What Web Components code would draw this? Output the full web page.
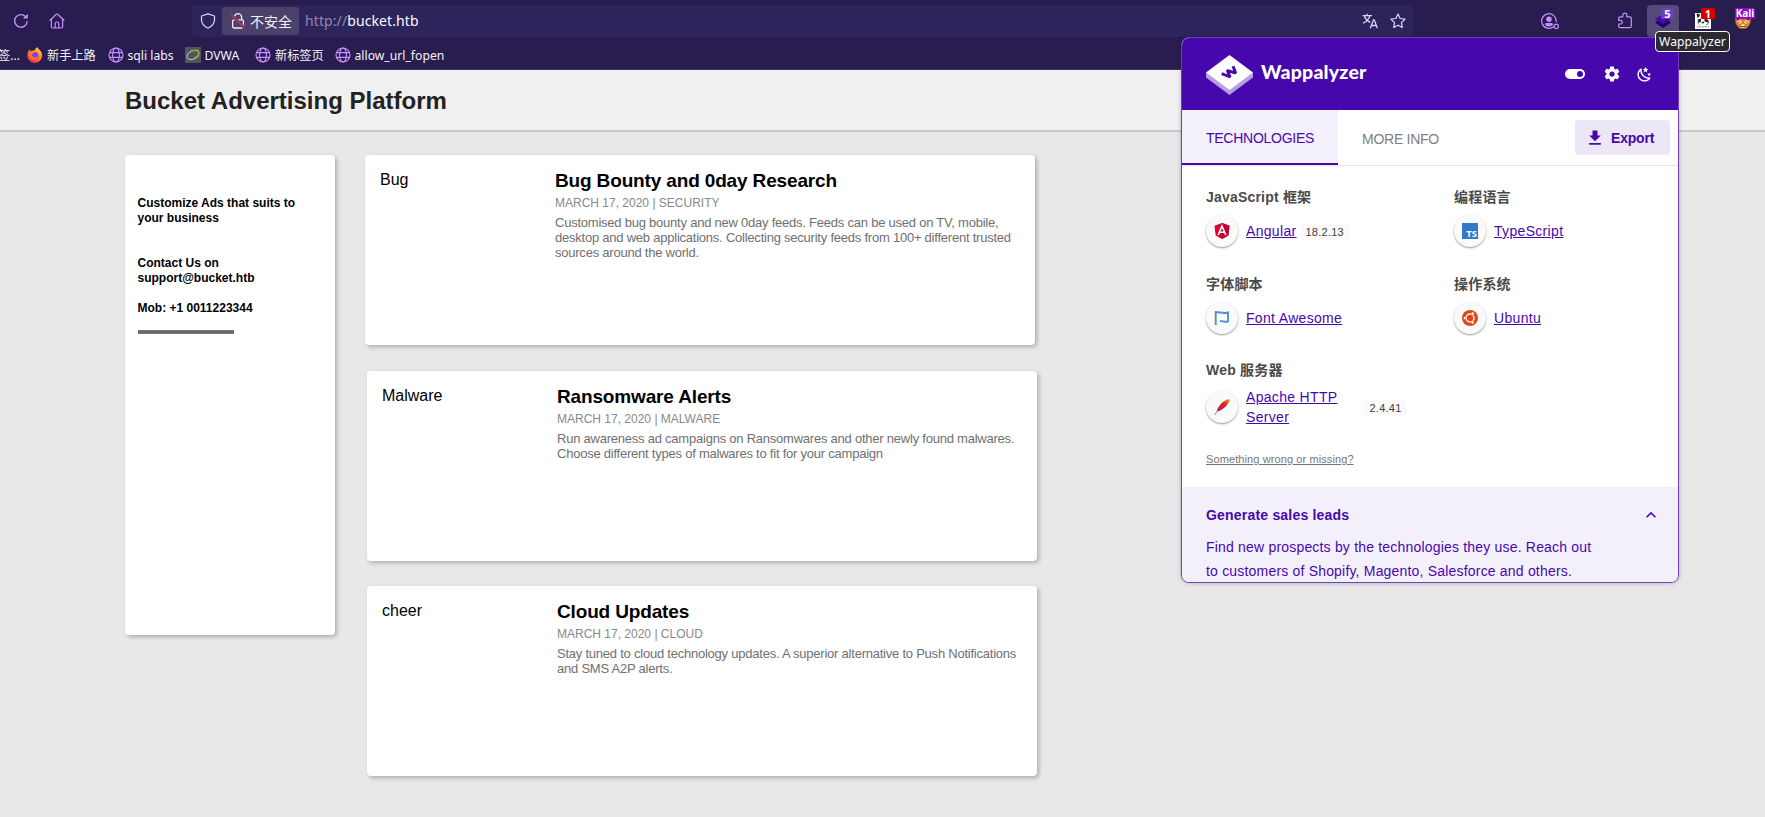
<!DOCTYPE html>
<html lang="zh-CN">
<head>
<meta charset="utf-8">
<title>Bucket Advertising Platform</title>
<style>
html,body{margin:0;height:100%;overflow:hidden;background:#e8e8e8}
body{font-family:"Liberation Sans","Noto Sans CJK SC",sans-serif}
</style>
</head>
<body>
<browser-window></browser-window>
<script>
const define=(name,html)=>customElements.define(name,class extends HTMLElement{
  constructor(){super();this.attachShadow({mode:'open'}).innerHTML=html;}
});

const ICONS={
reload:['0 0 16 16','<path d="M14.2 8.2A6.3 6.3 0 1 1 12.6 3.7" fill="none" stroke="currentColor" stroke-width="1.4"/><path d="M14.8.8v4.6h-4.8z" fill="currentColor"/>'],
home:['0 0 16 16','<path d="M1 7.2 7.3 1.3q.7-.6 1.4 0L15 7.2M2.4 6.2v7.6q0 1.2 1.2 1.2h8.8q1.2 0 1.2-1.2V6.2M6.2 15v-4.2a1.8 1.8 0 0 1 3.6 0V15" fill="none" stroke="currentColor" stroke-width="1.2" stroke-linecap="round" stroke-linejoin="round"/>'],
shield:['0 0 16 16','<path d="M8 .9 14.5 3v3.4c0 4-2.3 6.7-6.5 8.8C3.8 13.1 1.5 10.4 1.5 6.4V3z" fill="none" stroke="currentColor" stroke-width="1.2" stroke-linejoin="round"/>'],
lock:['0 0 16 16','<path d="M4.4 6.8V4.3a3.6 3.6 0 0 1 7.2 0V6.8" fill="none" stroke="currentColor" stroke-width="1.3"/><rect x="2.6" y="6.8" width="10.8" height="8.2" rx="1.4" fill="none" stroke="currentColor" stroke-width="1.3"/><path d="m1.5 2 13 13" stroke="#4a416b" stroke-width="3"/><path d="m1.2 1.7 13.3 13.3" stroke="#e22850" stroke-width="1.3"/>'],
translate:['0 0 16 16','<path d="M.6 2.6h9.4M5.2.8v1.8M7.800 2.800C7 6.200 4 8.600 1 10.200M2.400 3C3.400 6 6 8.300 8.200 9.400M8.300 15.200l3.200-8.400h.7l3.200 8.400M9.400 12.500h5" fill="none" stroke="currentColor" stroke-width="1.300"/>'],
star:['0 0 16 16','<path d="m8 1 2.100 4.500 4.900.7-3.600 3.400.9 4.900L8 12.200l-4.300 2.300.9-4.900L1 6.200l4.900-.7z" fill="none" stroke="currentColor" stroke-width="1.200" stroke-linejoin="round"/>'],
account:['0 0 18 17','<path d="M12.800 13.500A7.300 7.300 0 1 1 15.200 9" fill="none" stroke="currentColor" stroke-width="1.200"/><circle cx="8" cy="6.300" r="2.700" fill="currentColor"/><path d="M3.800 11.300q.4-1.400 1.800-1.400h4.800q1.300 0 1.800 1.300Q10.600 13.500 8 13.500T3.800 11.300z" fill="currentColor"/><circle cx="15.200" cy="13.300" r="2.200" fill="none" stroke="currentColor" stroke-width="1.200"/>'],
puzzle:['0 0 16 17','<path d="M5.800 4.800V3.200a2 2 0 0 1 4 0V4.800h3q1.500 0 1.500 1.500v7.900q0 1.500-1.500 1.500H3.200q-1.500 0-1.500-1.500V12H3.500a1.800 1.800 0 0 0 0-3.600H1.700V6.300q0-1.500 1.500-1.500z" fill="none" stroke="currentColor" stroke-width="1.200" stroke-linejoin="round"/>'],
globe:['0 0 16 16','<g fill="none" stroke="currentColor" stroke-width="1.150"><circle cx="8" cy="8" r="7"/><ellipse cx="8" cy="8" rx="3.400" ry="7"/><path d="M1.500 5.600h13M1.500 10.400h13"/></g>'],
firefox:['0 0 16 16','<defs><linearGradient id="f" x1=".9" y1="0" x2=".2" y2="1"><stop offset="0" stop-color="#ffe244"/><stop offset=".45" stop-color="#ff8a16"/><stop offset="1" stop-color="#f5156c"/></linearGradient></defs><path d="M10.700.2c.4 1.800 2 2.500 3 4 3.600 5-.1 11.600-5.800 11.600C2.500 15.800-.8 10.700.6 6.500 1 4.600 2.100 2.400 2.500 2.300c.2.600.4 1.400.9 1.900 1.500-.8 2.800-.8 4.200-.4C7.900 2.200 9.200.5 10.700.2z" fill="url(#f)"/><circle cx="7.800" cy="8.700" r="3.600" fill="#7a3ff0"/><path d="M1.800 5.500c2-1.600 4.700-.8 5.800.5-1.600 0-1.800.8-2.700 1.700.4 3 4 3.700 6 1.400 0 3.200-3.600 4.800-6.300 3.200C2.400 11 1.500 8 1.800 5.500z" fill="#ff7a1c"/>'],
dvwa:['0 0 16 16','<path fill="#50575a" d="M0 0h16v16H0z"/><ellipse cx="8" cy="8" rx="6.300" ry="4.200" transform="rotate(-25 8 8)" fill="none" stroke="#b4b9a9" stroke-width="1.100"/><path d="M6 4.200C9.500 2.500 14 2.500 13.800 5.800c-.2 2.200-2.300 4.300-4.600 5.400" fill="none" stroke="#8ea648" stroke-width="1.300"/>'],
wapp:['0 0 16 16','<path d="M8 5.200 16 10.500 8 16 0 10.500z" fill="#1d0460"/><path d="M8 1.600 16 7 8 12.400 0 7z" fill="#4608ad"/>'],
panda:['0 0 16 16','<path fill="#fff" d="M0 0h16v16H0z"/><path d="M1.500.8h3.200v2.500L2.500 5zM2.500 6.800l3.500-1.300v3L3.500 10zM9.500 5.500l3.500 1.300v2.800l-3.500-1zM6.600 8.800h2.500v1.400H6.600zM2 5v4l2 2 1 1h6l2-2 .5-3.500.5 3-2 2.500H4.500L2 9.500z" fill="#252525"/><path d="M2 13.800h12" stroke="#555" stroke-width=".9" stroke-dasharray="1 .6"/>'],
fox:['0 0 16 15','<path d="M0 3h16l-.8 7-3.700 4.500h-7L.8 10z" fill="#e77d16"/><path d="M2 7.500 5 6l2 2.500-2.500 1.200zM9 8.500 11 6l3 1.500-2.500 2.200z" fill="#fff"/><path d="m5 11.500 3-1.500 3 1.500-1.500 2.500h-3z" fill="#f7e3cd"/><path d="M3.500 8h1.800M10.700 8h1.800M5 12l2.700.8L11 12M1.500 5.500h3M11.500 5.500h3" stroke="#5c2a08" fill="none"/>'],
logo:['0 0 47 40','<path d="M0 17.500h47v5L23.500 40 0 22.500z" fill="#b59fe1"/><path d="M23.500 0 47 17.500 23.500 35 0 17.500z" fill="#fff"/><path d="m15.700 18.700 8.500 3.300-3-6.500 8.500 2.600-2.700-6.800" fill="none" stroke="#4608ad" stroke-width="2.900" stroke-linejoin="bevel"/>'],
gear:['0 0 24 24','<path fill="currentColor" d="M12,15.500A3.500,3.500 0 0,1 8.500,12A3.500,3.500 0 0,1 12,8.500A3.500,3.500 0 0,1 15.500,12A3.500,3.500 0 0,1 12,15.500M19.430,12.970C19.470,12.650 19.500,12.330 19.500,12C19.500,11.670 19.470,11.340 19.430,11L21.540,9.370C21.730,9.220 21.780,8.950 21.660,8.730L19.660,5.270C19.540,5.050 19.270,4.960 19.050,5.050L16.560,6.050C16.040,5.660 15.500,5.320 14.870,5.070L14.500,2.420C14.460,2.180 14.250,2 14,2H10C9.750,2 9.540,2.180 9.500,2.420L9.130,5.070C8.500,5.320 7.960,5.660 7.440,6.050L4.950,5.050C4.730,4.960 4.460,5.050 4.340,5.270L2.340,8.730C2.210,8.950 2.270,9.220 2.460,9.370L4.570,11C4.530,11.340 4.500,11.670 4.500,12C4.500,12.330 4.530,12.650 4.570,12.970L2.460,14.630C2.270,14.780 2.210,15.050 2.340,15.270L4.340,18.730C4.460,18.950 4.730,19.030 4.950,18.950L7.440,17.940C7.960,18.340 8.500,18.680 9.130,18.930L9.500,21.580C9.540,21.820 9.750,22 10,22H14C14.250,22 14.460,21.820 14.500,21.580L14.870,18.930C15.500,18.670 16.040,18.340 16.560,17.940L19.050,18.950C19.270,19.030 19.540,18.950 19.660,18.730L21.660,15.270C21.780,15.050 21.730,14.780 21.540,14.630L19.430,12.970Z"/>'],
moon:['0 0 24 24','<path fill="currentColor" d="M17.750,4.090L15.220,6.030L16.130,9.090L13.500,7.280L10.870,9.090L11.780,6.030L9.250,4.090L12.440,4L13.500,1L14.560,4L17.750,4.090M21.250,11L19.610,12.250L20.200,14.230L18.500,13.060L16.800,14.230L17.390,12.250L15.750,11L17.810,10.950L18.500,9L19.190,10.950L21.250,11M18.970,15.950C19.800,15.870 20.690,17.050 20.160,17.800C19.840,18.250 19.500,18.670 19.080,19.070C15.170,23 8.840,23 4.940,19.070C1.030,15.170 1.030,8.830 4.940,4.930C5.340,4.530 5.760,4.170 6.210,3.850C6.960,3.320 8.140,4.210 8.060,5.040C7.790,7.900 8.750,10.870 10.950,13.060C13.140,15.260 16.100,16.220 18.970,15.950M17.330,17.970C14.500,17.810 11.700,16.640 9.530,14.500C7.360,12.310 6.200,9.500 6.040,6.680C3.230,9.820 3.340,14.640 6.350,17.660C9.370,20.670 14.190,20.780 17.330,17.970Z"/>'],
toggle:['0 0 20 10','<rect width="20" height="10" rx="5" fill="#fff"/><circle cx="15" cy="5" r="3" fill="#4608ad"/>'],
download:['0 0 24 24','<path fill="currentColor" d="M5 20h14v-2H5v2zM19 9h-4V3H9v6H5l7 7 7-7z"/>'],
chevron:['0 0 24 24','<path fill="currentColor" d="M7.410,15.410L12,10.830L16.590,15.410L18,14L12,8L6,14L7.410,15.410Z"/>'],
angular:['0 0 16 16','<path d="M8 0 15.500 2.700 14.300 12.500 8 16 1.700 12.500.5 2.700z" fill="#dd0031"/><path d="M8 0 15.500 2.700 14.300 12.500 8 16z" fill="#c3002f"/><path d="M4.200 12 8 3l3.800 9M5.700 9.300h4.600" fill="none" stroke="#fff" stroke-width="1.600"/>'],
fa:['0 0 16 16','<path d="M1.700 1v14M1.700 2.600C5 1 8 4.300 14 2.500v8.800c-3.500 1.500-5-.4-8-.3" fill="none" stroke="#4f8fd9" stroke-width="1.900"/>'],
ubuntu:['0 0 16 16','<circle cx="8" cy="8" r="8" fill="#dd4814"/><circle cx="8" cy="8" r="3.900" fill="none" stroke="#fff" stroke-width="1.500"/><g fill="#fff" stroke="#dd4814" stroke-width=".6"><circle cx="2.800" cy="8" r="1.500"/><circle cx="10.600" cy="3.500" r="1.500"/><circle cx="10.600" cy="12.500" r="1.500"/></g>'],
apache:['0 0 16 16','<defs><linearGradient id="a" x1="1" y1="0" x2="0" y2="1"><stop offset="0" stop-color="#f8a01c"/><stop offset=".35" stop-color="#d5212e"/><stop offset=".65" stop-color="#c22049"/><stop offset="1" stop-color="#8b3f96"/></linearGradient></defs><path d="M15.800.3C14 0 10.500 1.300 7.500 4.300 4.500 7.800 3 10.500 2.900 12L.3 16l.7-.1L3.300 12.500c3.200-.4 7.200-3.400 9.700-6.500C14.800 4.300 16 2 15.800.3z" fill="url(#a)"/>']
};
customElements.define('app-icon',class extends HTMLElement{
  connectedCallback(){
    const [box,body]=ICONS[this.getAttribute('name')];
    const w=this.getAttribute('w')||16,h=this.getAttribute('h')||w;
    const r=this.shadowRoot||this.attachShadow({mode:'open'});
    r.innerHTML=`<style>:host{display:block;flex:none;width:${w}px;height:${h}px}svg{display:block}</style><svg width="${w}" height="${h}" viewBox="${box}" preserveAspectRatio="none">${body}</svg>`;
  }
});

define('nav-bar',`<style>
:host{display:flex;height:40px;box-sizing:border-box;padding:5px 8px 0 13px;color:#c490ff;font-family:"Noto Sans","Noto Sans CJK SC",sans-serif}
.left{display:flex;gap:19.500px;width:179px;padding-top:8px}
.url{display:flex;width:1222px;height:32px;box-sizing:border-box;padding:0 8px 0 8px;border-radius:4px;background:#2e245c;color:#dcd3f5;align-items:center}
.sec{display:flex;align-items:center;width:77px;height:28px;box-sizing:border-box;margin-left:6px;padding-left:8px;gap:4px;border-radius:3px;background:#4a416b;font:14px/28px "Noto Sans CJK SC",sans-serif;color:#f3effc;white-space:nowrap}
.addr{flex:1;margin-left:6px;font-size:14px;line-height:28px;color:#fbfbfe;letter-spacing:.1px}
.addr i{font-style:normal;color:#9188ab;letter-spacing:.1px}
.acts{display:flex;gap:12px}
.right{display:flex;flex:1;padding-left:127px}
.right>*{flex:none}
.wap{width:32px;height:32px;border-radius:4px;background:#564a79;margin-left:14px;position:relative}
.wap app-icon{margin:7px 8px}
.ext{position:relative;width:20px;height:32px}
b{position:absolute;top:3px;height:11px;font:bold 11px/11px "Noto Sans",sans-serif;color:#fff;text-align:center;border-radius:1.500px;white-space:nowrap}
</style>
<div class="left"><app-icon name="reload"></app-icon><app-icon name="home" w="16"></app-icon></div>
<div class="url"><app-icon name="shield"></app-icon><div class="sec"><app-icon name="lock"></app-icon><span>不安全</span></div>
<div class="addr"><i>http://</i>bucket.htb</div><div class="acts"><app-icon name="translate"></app-icon><app-icon name="star"></app-icon></div></div>
<div class="right"><app-icon name="account" w="18" h="17" style="margin-top:8px"></app-icon><app-icon name="puzzle" w="16" h="17" style="margin:7px 0 0 58px"></app-icon>
<div class="wap"><app-icon name="wapp"></app-icon><b style="left:14px;width:13px;background:#6b3fbf">5</b></div>
<div class="ext" style="margin-left:16px"><app-icon name="panda" style="padding-top:8px"></app-icon><b style="left:6px;width:14px;background:#d70000">1</b></div>
<div class="ext" style="margin-left:20px"><app-icon name="fox" w="16" h="15" style="padding-top:9px"></app-icon><b style="left:0;width:20px;background:#8f0bd0;font-size:10px">Kali</b></div></div>`);

define('bookmark-bar',`<style>
:host{display:grid;grid-template-columns:27px 80.500px 77px 70.500px 79.500px 130px;height:30px;box-sizing:border-box;border-bottom:1px solid #3f3468;color:#fbfbfe;font:12.200px/29px "Noto Sans","Noto Sans CJK SC",sans-serif;white-space:nowrap}
span{display:flex;align-items:center;gap:4px;color:#c490ff}
em{font-style:normal;color:#f3f0fb;padding-top:2px;line-height:27px}
.cut{margin-left:-2px}
</style>
<span class="cut"><em>签...</em></span>
<span><app-icon name="firefox"></app-icon><em>新手上路</em></span>
<span><app-icon name="globe"></app-icon><em>sqli labs</em></span>
<span><app-icon name="dvwa"></app-icon><em>DVWA</em></span>
<span><app-icon name="globe"></app-icon><em>新标签页</em></span>
<span><app-icon name="globe"></app-icon><em>allow_url_fopen</em></span>`);

define('site-header',`<style>
:host{display:block;height:62px;box-sizing:border-box;background:#f0f0f0;border-bottom:2px solid #cacaca;padding-left:125px}
h1{margin:0;font-size:24px;line-height:62px;height:60px;color:#222}
</style><h1>Bucket Advertising Platform</h1>`);

define('side-card',`<style>
:host{display:block;width:210px;height:480px;box-sizing:border-box;padding:41px 12.500px 0;border-radius:4px;background:#fff;box-shadow:2px 2px 4px rgba(0,0,0,.25);font:bold 12px/15px "Liberation Sans",sans-serif;color:#000}
p{margin:0 0 30px;width:170px}
p+p{margin-bottom:15px}
p:last-of-type{margin-bottom:14px}
hr{width:96px;height:4px;margin:0 0 0 .5px;border:0;background:#666;box-sizing:border-box;border-top:1px solid #777;border-bottom:1px solid #777}
</style><p>Customize Ads that suits to your business</p><p>Contact Us on support@bucket.htb</p><p>Mob: +1 0011223344</p><hr>`);

define('ad-card',`<style>
:host{display:grid;grid-template-columns:175px 1fr;width:670px;height:190px;box-sizing:border-box;padding:15px 14px 0 15px;border-radius:4px;background:#fff;box-shadow:2px 2px 4px rgba(0,0,0,.25)}
.label{font-size:16px;line-height:19px;color:#000}
h3{margin:-1px 0 0;font-size:19px;line-height:23px;letter-spacing:-.15px;color:#000}
.date{font-size:12px;line-height:15px;margin-top:4px;color:#888}
p{margin:4px 0 0;font-size:13px;line-height:15px;letter-spacing:-.23px;color:#707070}
</style><div class="label"><slot name="label"></slot></div><div><h3><slot name="title"></slot></h3><div class="date"><slot name="date"></slot></div><p><slot></slot></p></div>`);

define('tech-item',`<style>
:host{display:block}
h4{margin:0;font-size:14px;line-height:20px;color:#4a4a4a;letter-spacing:.2px}
.row{display:flex;align-items:center;height:40px;margin-top:4px}
:host([tall]) .row{margin-top:7px}
.disc{flex:none;width:32px;height:32px;border-radius:50%;background:#fafafa;box-shadow:0 1px 2px rgba(0,0,0,.4);display:flex;align-items:center;justify-content:center;margin-right:8px}
a{color:#4608ad;text-decoration:underline;text-underline-offset:1px;font-size:14px;line-height:20px;letter-spacing:.32px}
</style><h4><slot name="head"></slot></h4><div class="row"><div class="disc"><slot name="icon"></slot></div><a><slot></slot></a><slot name="ver"></slot></div>`);
define('version-chip',`<style>:host{display:block;flex:none;height:16px;box-sizing:border-box;padding:0 5px;margin:2px 0 0 4px;border-radius:2px;background:#fafafa;font-size:11px;line-height:16px;letter-spacing:.25px;color:#404040}</style><slot></slot>`);
define('ts-badge',`<style>:host{display:flex;justify-content:flex-end;align-items:flex-end;width:16px;height:16px;box-sizing:border-box;padding:0 1px 1px 0;background:#3178c6;color:#fff;font:bold 9.500px/8px "Open Sans",sans-serif}</style>TS`);

define('wappalyzer-popup',`<style>
:host{display:block;width:498px;height:546px;box-sizing:border-box;border:1px solid #6f3cc4;border-radius:8px;overflow:hidden;background:#fff;box-shadow:0 0 4px rgba(0,0,0,.25)}
header{display:flex;height:72px;background:#4608ad;color:#fff;align-items:center;padding:0 25px 0 24px}
header app-icon:first-child{margin:2px 8px 0 0}
.name{flex:1;font:900 19.500px/24px Lato,sans-serif;letter-spacing:.2px;margin-top:-4px}
.tabs{display:flex;height:56px;box-sizing:border-box;border-bottom:1px solid #e4e4e4;font-size:14px}
.tab{box-sizing:border-box;width:156px;height:55px;padding-left:24px;line-height:56px;background:#f4f0fb;border-bottom:2px solid #4608ad;color:#4608ad;letter-spacing:-.26px}
.tab+.tab{flex:1;background:none;border:0;color:#808080;line-height:58px}
.exp{display:flex;align-items:center;gap:6px;width:95px;height:35px;box-sizing:border-box;padding-left:10px;margin:10px 8px 0 0;border-radius:4px;background:#ede6f6;color:#4608ad;font-weight:bold;letter-spacing:-.2px}
.grid{display:grid;grid-template-columns:248px 1fr;grid-template-rows:87px 86px 80px;align-content:start;padding:21px 0 0 24px;height:300px;box-sizing:border-box}
.miss{padding-left:24px;font-size:11px;line-height:14px;color:#757575;text-decoration:underline;margin-top:-14px;height:35px;box-sizing:border-box;letter-spacing:.1px}
.leads{background:#f4f0fb;height:110px;padding:16px 19px 0 24px;color:#4608ad;font-size:14px}
.leads div{display:flex;justify-content:space-between;align-items:center;height:24px;font-weight:bold;letter-spacing:.2px}
.leads p{margin:8px 0 0;width:400px;line-height:24px;letter-spacing:.19px}
</style>
<header><app-icon name="logo" w="47" h="40"></app-icon><span class="name">Wappalyzer</span><app-icon name="toggle" w="20" h="10"></app-icon><app-icon name="gear" w="18" style="margin-left:18px"></app-icon><app-icon name="moon" w="17" style="margin-left:15px"></app-icon></header>
<div class="tabs"><div class="tab">TECHNOLOGIES</div><div class="tab">MORE INFO</div><div class="exp"><app-icon name="download" w="20"></app-icon><span>Export</span></div></div>
<div class="grid">
<tech-item><span slot="head">JavaScript 框架</span><app-icon slot="icon" name="angular"></app-icon>Angular<version-chip slot="ver">18.2.13</version-chip></tech-item>
<tech-item><span slot="head">编程语言</span><ts-badge slot="icon"></ts-badge>TypeScript</tech-item>
<tech-item><span slot="head">字体脚本</span><app-icon slot="icon" name="fa"></app-icon>Font Awesome</tech-item>
<tech-item><span slot="head">操作系统</span><app-icon slot="icon" name="ubuntu"></app-icon>Ubuntu</tech-item>
<tech-item tall><span slot="head">Web 服务器</span><app-icon slot="icon" name="apache"></app-icon>Apache HTTP<br>Server<version-chip slot="ver" style="margin-left:27px">2.4.41</version-chip></tech-item>
</div>
<div class="miss">Something wrong or missing?</div>
<div class="leads"><div>Generate sales leads<app-icon name="chevron" w="20" style="margin-right:-2px"></app-icon></div><p>Find new prospects by the technologies they use. Reach out to customers of Shopify, Magento, Salesforce and others.</p></div>`);

define('tool-tip',`<style>:host{display:block;width:75px;height:21px;box-sizing:border-box;border:1px solid #fff;border-radius:4px;background:#2b2a33;color:#fbfbfe;font:12.200px/20px "Noto Sans",sans-serif;text-align:center;white-space:nowrap}</style><slot></slot>`);

define('browser-window',`<style>
:host{display:flex;flex-direction:column;width:1765px;height:817px;position:relative;overflow:hidden;background:#e8e8e8}
.chrome{background:#291d4f}
main{display:flex;padding:23px 0 0 125px;gap:30px}
.feed{display:flex;flex-direction:column;gap:25px}
.feed ad-card+ad-card{margin-left:2px}
.feed ad-card:nth-child(2){margin-top:1px}
wappalyzer-popup{position:absolute;left:1181px;top:37px}
tool-tip{position:absolute;left:1655px;top:31px}
</style>
<div class="chrome"><nav-bar></nav-bar><bookmark-bar></bookmark-bar></div>
<site-header></site-header>
<main><side-card></side-card><div class="feed">
<ad-card><span slot="label">Bug</span><span slot="title">Bug Bounty and 0day Research</span><span slot="date">MARCH 17, 2020 | SECURITY</span>Customised bug bounty and new 0day feeds. Feeds can be used on TV, mobile, desktop and web applications. Collecting security feeds from 100+ different trusted sources around the world.</ad-card>
<ad-card><span slot="label">Malware</span><span slot="title">Ransomware Alerts</span><span slot="date">MARCH 17, 2020 | MALWARE</span>Run awareness ad campaigns on Ransomwares and other newly found malwares. Choose different types of malwares to fit for your campaign</ad-card>
<ad-card><span slot="label">cheer</span><span slot="title">Cloud Updates</span><span slot="date">MARCH 17, 2020 | CLOUD</span>Stay tuned to cloud technology updates. A superior alternative to Push Notifications and SMS A2P alerts.</ad-card>
</div></main>
<wappalyzer-popup></wappalyzer-popup><tool-tip>Wappalyzer</tool-tip>`);
</script>
</body>
</html>
